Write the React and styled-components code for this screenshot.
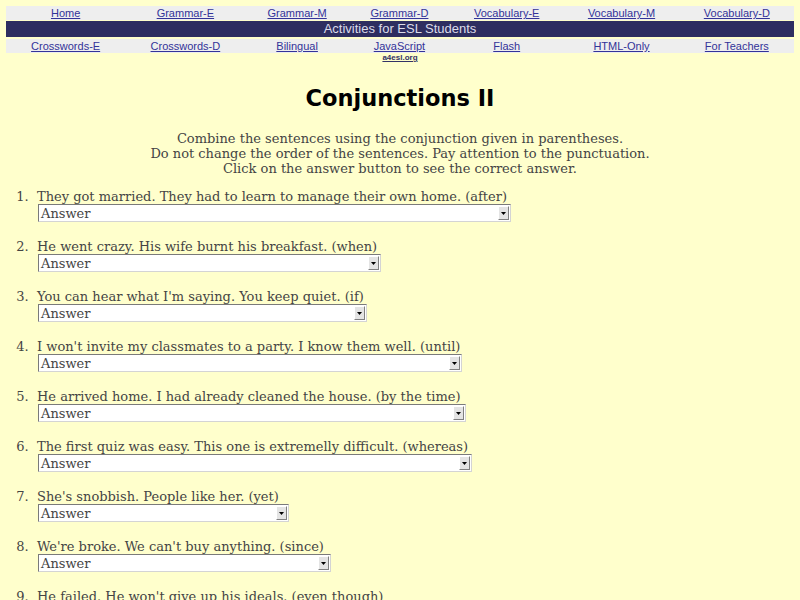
import React from "react";
import styled, { createGlobalStyle } from "styled-components";

const GlobalStyle = createGlobalStyle`
  html, body {
    margin: 0;
    padding: 0;
    background: #ffffcc;
  }
  body {
    font-family: "DejaVu Serif", serif;
    color: #444;
  }
`;

const topLinks = ["Home", "Grammar-E", "Grammar-M", "Grammar-D", "Vocabulary-E", "Vocabulary-M", "Vocabulary-D"];
const bottomLinks = ["Crosswords-E", "Crosswords-D", "Bilingual", "JavaScript", "Flash", "HTML-Only", "For Teachers"];

const questions = [
  { text: "They got married. They had to learn to manage their own home. (after)", width: 473 },
  { text: "He went crazy. His wife burnt his breakfast. (when)", width: 343 },
  { text: "You can hear what I'm saying. You keep quiet. (if)", width: 329 },
  { text: "I won't invite my classmates to a party. I know them well. (until)", width: 424 },
  { text: "He arrived home. I had already cleaned the house. (by the time)", width: 428 },
  { text: "The first quiz was easy. This one is extremelly difficult. (whereas)", width: 434 },
  { text: "She's snobbish. People like her. (yet)", width: 251 },
  { text: "We're broke. We can't buy anything. (since)", width: 293 },
  { text: "He failed. He won't give up his ideals. (even though)", width: 359 },
];

function App() {
  return (
    <>
      <GlobalStyle />
      <P.Page>
        <P.NavTable>
          <tbody>
            <tr>
              {topLinks.map((name) => (
                <P.NavCell key={name}>
                  <P.NavLink href="#">{name}</P.NavLink>
                </P.NavCell>
              ))}
            </tr>
            <tr>
              <P.Banner colSpan={7}>Activities for ESL Students</P.Banner>
            </tr>
            <tr>
              {bottomLinks.map((name) => (
                <P.NavCell key={name}>
                  <P.NavLink href="#">{name}</P.NavLink>
                </P.NavCell>
              ))}
            </tr>
          </tbody>
        </P.NavTable>
        <P.SiteTag>
          <a href="#">a4esl.org</a>
        </P.SiteTag>

        <P.Title>Conjunctions II</P.Title>

        <P.Intro>
          Combine the sentences using the conjunction given in parentheses.
          <br />
          Do not change the order of the sentences. Pay attention to the punctuation.
          <br />
          Click on the answer button to see the correct answer.
        </P.Intro>

        <P.List>
          {questions.map(({ text, width }) => (
            <P.Item key={text}>
              {text}
              <br />
              <P.Select $width={width}>
                <P.SelectText>Answer</P.SelectText>
                <P.Arrow>
                  <svg width="5" height="3" viewBox="0 0 5 3">
                    <path d="M0 0h5L2.5 3z" fill="#000" />
                  </svg>
                </P.Arrow>
              </P.Select>
            </P.Item>
          ))}
        </P.List>
      </P.Page>
    </>
  );
}

// P는 Page

const P = {
  Page: styled.div`
    padding: 6px 6px 0;
  `,

  NavTable: styled.table`
    width: 100%;
    border-collapse: collapse;
    font-family: "Liberation Sans", Arial, sans-serif;
    font-size: 11px;
  `,

  NavCell: styled.td`
    background: #eeeeee;
    text-align: center;
    height: 14px;
    padding: 0 2px;
    line-height: 14px;
  `,

  NavLink: styled.a`
    color: #333399;
    text-decoration: underline;
  `,

  Banner: styled.td`
    background: #2e2e60;
    color: #dcdcea;
    text-align: center;
    font-family: "Liberation Sans", Arial, sans-serif;
    font-size: 13px;
    height: 16px;
    line-height: 16px;
    padding: 0;
    border-top: 1px solid #ffffcc;
    border-bottom: 2px solid #ffffcc;
  `,

  SiteTag: styled.div`
    text-align: center;
    font-family: "Liberation Sans", Arial, sans-serif;
    font-size: 8px;
    font-weight: bold;
    line-height: 10px;

    a {
      color: #333366;
    }
  `,

  Title: styled.h1`
    margin: 20px 0 0;
    text-align: center;
    font-family: "DejaVu Sans", sans-serif;
    font-size: 22.5px;
    font-weight: bold;
    color: #000;
    line-height: 30px;
  `,

  Intro: styled.p`
    margin: 18px 0 0;
    text-align: center;
    font-size: 13px;
    line-height: 15px;
  `,

  List: styled.ol`
    margin: 13px 0 0;
    padding-left: 31px;
    font-size: 13px;
    line-height: 15px;
  `,

  Item: styled.li`
    margin-bottom: 17px;

    &::marker {
      content: counter(list-item) ".  ";
    }
  `,

  Select: styled.span`
    display: inline-flex;
    align-items: center;
    box-sizing: border-box;
    width: ${({ $width }) => $width}px;
    height: 18px;
    margin-left: 1px;
    background: #fff;
    border-top: 1px solid #7a7a7a;
    border-left: 1px solid #7a7a7a;
    border-right: 1px solid #d4d4d4;
    border-bottom: 1px solid #d4d4d4;
    vertical-align: top;
  `,

  SelectText: styled.span`
    flex: 1;
    padding-left: 2px;
    font-size: 13px;
    color: #444;
  `,

  Arrow: styled.span`
    display: flex;
    align-items: center;
    justify-content: center;
    width: 11px;
    height: 14px;
    margin-right: 1px;
    background: #e4e4e4;
    border: 1px solid;
    border-color: #fff #808080 #808080 #fff;
    box-sizing: border-box;
  `,
};

export default App;
